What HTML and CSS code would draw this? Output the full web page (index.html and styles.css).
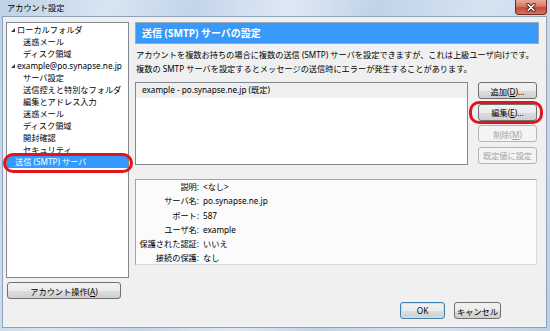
FILE: index.html
```html
<!DOCTYPE html>
<html lang="ja">
<head>
    <meta charset="UTF-8">
    <title>アカウント設定</title>
    <link rel="stylesheet" href="styles.css">
</head>
<body>
    <div class="window">
        <div class="titlebar">
            <span class="title">アカウント設定</span>
            <div class="close">
                <svg width="12" height="9" viewBox="0 0 12 9">
                    <path d="M3 1.5 L9 7.5 M9 1.5 L3 7.5" stroke="#4a1a14" stroke-width="3.2" stroke-linecap="round"/>
                    <path d="M3 1.5 L9 7.5 M9 1.5 L3 7.5" stroke="#ffffff" stroke-width="1.6" stroke-linecap="round"/>
                </svg>
            </div>
        </div>

        <div class="body">
            <div class="main">
                <div class="sidebar">
                    <ul class="tree">
                        <li class="top"><svg class="twisty" width="4" height="4" viewBox="0 0 4 4"><polygon points="4,0 4,4 0,4" fill="#333"/></svg>ローカルフォルダ</li>
                        <li class="child">迷惑メール</li>
                        <li class="child">ディスク領域</li>
                        <li class="top"><svg class="twisty" width="4" height="4" viewBox="0 0 4 4"><polygon points="4,0 4,4 0,4" fill="#333"/></svg>example@po.synapse.ne.jp</li>
                        <li class="child">サーバ設定</li>
                        <li class="child">送信控えと特別なフォルダ</li>
                        <li class="child">編集とアドレス入力</li>
                        <li class="child">迷惑メール</li>
                        <li class="child">ディスク領域</li>
                        <li class="child">開封確認</li>
                        <li class="child">セキュリティ</li>
                        <li class="top plain selected">送信 (SMTP) サーバ</li>
                    </ul>
                    <button class="btn account-btn">アカウント操作(<u>A</u>)</button>
                </div>

                <div class="panel">
                    <div class="panel-head">送信 (SMTP) サーバの設定</div>
                    <p class="desc">アカウントを複数お持ちの場合に複数の送信 (SMTP) サーバを設定できますが、これは上級ユーザ向けです。<br>複数の SMTP サーバを設定するとメッセージの送信時にエラーが発生することがあります。</p>

                    <div class="server-row">
                        <div class="server-list">
                            <div class="server-item">example - po.synapse.ne.jp (既定)</div>
                        </div>
                        <div class="server-buttons">
                            <button class="btn">追加(<u>D</u>)...</button>
                            <button class="btn">編集(<u>E</u>)...</button>
                            <button class="btn" disabled>削除(<u>M</u>)</button>
                            <button class="btn" disabled>既定値に設定</button>
                        </div>
                    </div>

                    <div class="details">
                        <span class="label">説明:</span><span>&lt;なし&gt;</span>
                        <span class="label">サーバ名:</span><span>po.synapse.ne.jp</span>
                        <span class="label">ポート:</span><span>587</span>
                        <span class="label">ユーザ名:</span><span>example</span>
                        <span class="label">保護された認証:</span><span>いいえ</span>
                        <span class="label">接続の保護:</span><span>なし</span>
                    </div>
                </div>
            </div>

            <div class="footer">
                <button class="btn default ok-btn">OK</button>
                <button class="btn cancel-btn">キャンセル</button>
            </div>
        </div>

        <!-- red highlight marks drawn over the dialog -->
        <div class="mark mark-tree"></div>
        <div class="mark mark-edit"></div>
    </div>
</body>
</html>
```

FILE: styles.css
```css
* {
    box-sizing: border-box;
}
body {
    margin: 0;
    font-family: "Noto Sans", "Noto Sans CJK JP", sans-serif;
    font-size: 8.2px;
    color: #000;
}
.window {
    position: relative;
    width: 550px;
    height: 331px;
    display: flex;
    flex-direction: column;
    padding: 0 3px 3px 2px;
    background: linear-gradient(100deg, #bfd2e7 0%, #d8e5f2 18%, #c3d5e9 32%, #dfe9f4 48%, #c0d3e8 62%, #d6e4f2 80%, #bdd0e6 100%);
}
.titlebar {
    height: 16px;
    display: flex;
    align-items: center;
    justify-content: space-between;
}
.title {
    padding-left: 5px;
    font-size: 8.2px;
    line-height: 14px;
}
.close {
    align-self: flex-start;
    width: 32px;
    height: 15px;
    display: flex;
    align-items: center;
    justify-content: center;
    border: 1px solid #6e2b24;
    border-top: none;
    border-radius: 0 0 4px 4px;
    background: linear-gradient(#e9a797, #d77a66 45%, #c34a36 55%, #d4765c);
}
.body {
    flex: 1;
    display: flex;
    flex-direction: column;
    background-color: #f0f0f0;
    border: 1px solid #8ea3bb;
    padding: 5px 7px 0 3px;
}
.main {
    display: flex;
    gap: 6px;
}
.sidebar {
    width: 123px;
    display: flex;
    flex-direction: column;
    gap: 4px;
}
.tree {
    list-style: none;
    margin: 0;
    padding: 1px 0;
    height: 256px;
    background-color: white;
    border: 1px solid #828790;
}
.tree li {
    height: 12px;
    line-height: 12px;
    white-space: nowrap;
}
.tree .top {
    padding-left: 4px;
}
.tree .plain {
    padding-left: 8px;
}
.tree .child {
    padding-left: 16px;
}
.twisty {
    margin-right: 2px;
    vertical-align: 1px;
}
.tree .selected {
    background-color: #3399ff;
    color: white;
}
.btn {
    height: 17px;
    padding: 0;
    font-family: inherit;
    font-size: 8.2px;
    color: #000;
    border: 1px solid #707070;
    border-radius: 3px;
    background: linear-gradient(#f2f2f2 0%, #ebebeb 50%, #dddddd 51%, #cfcfcf 100%);
}
.btn:disabled {
    color: #a3a3a3;
    border-color: #b5b5b5;
    background: #f4f4f4;
}
.btn.default {
    border-color: #3c7fb1;
    box-shadow: inset 0 0 0 1px #bfe5f8;
}
.account-btn {
    width: 114px;
    margin-left: 1px;
}
.panel {
    flex: 1;
    display: flex;
    flex-direction: column;
}
.panel-head {
    height: 22px;
    line-height: 20px;
    padding-left: 6px;
    background-color: #3799fa;
    border: 1px solid #9aa9b8;
    color: white;
    font-weight: bold;
    font-size: 10px;
}
.desc {
    margin: 4px 0 0 1px;
    line-height: 14px;
    white-space: nowrap;
}
.server-row {
    display: flex;
    gap: 10px;
    margin-top: 6px;
}
.server-list {
    width: 333px;
    height: 83px;
    background-color: white;
    border: 1px solid #828790;
}
.server-item {
    height: 15px;
    line-height: 14px;
    padding-left: 6px;
    background-color: #efefef;
}
.server-buttons {
    width: 59px;
    display: flex;
    flex-direction: column;
    gap: 4.5px;
}
.details {
    display: grid;
    grid-template-columns: 63px 1fr;
    column-gap: 4px;
    margin: 14px 2px 0 0;
    height: 86px;
    line-height: 14.3px;
    background-color: #fbfbfb;
    border: 1px solid #a5a5a5;
    border-right-color: #d8d8d8;
    border-bottom-color: #d8d8d8;
    align-content: start;
}
.details .label {
    text-align: right;
    white-space: nowrap;
}
.footer {
    display: flex;
    justify-content: flex-end;
    gap: 9px;
    margin-top: 3px;
    padding-right: 38px;
}
.ok-btn {
    width: 45px;
}
.cancel-btn {
    width: 47px;
}
.mark {
    position: absolute;
    border: 3px solid #e4141c;
    border-radius: 10px;
}
.mark-tree {
    left: 3px;
    top: 153px;
    width: 130px;
    height: 20px;
}
.mark-edit {
    left: 469px;
    top: 101px;
    width: 74px;
    height: 23px;
}
```
